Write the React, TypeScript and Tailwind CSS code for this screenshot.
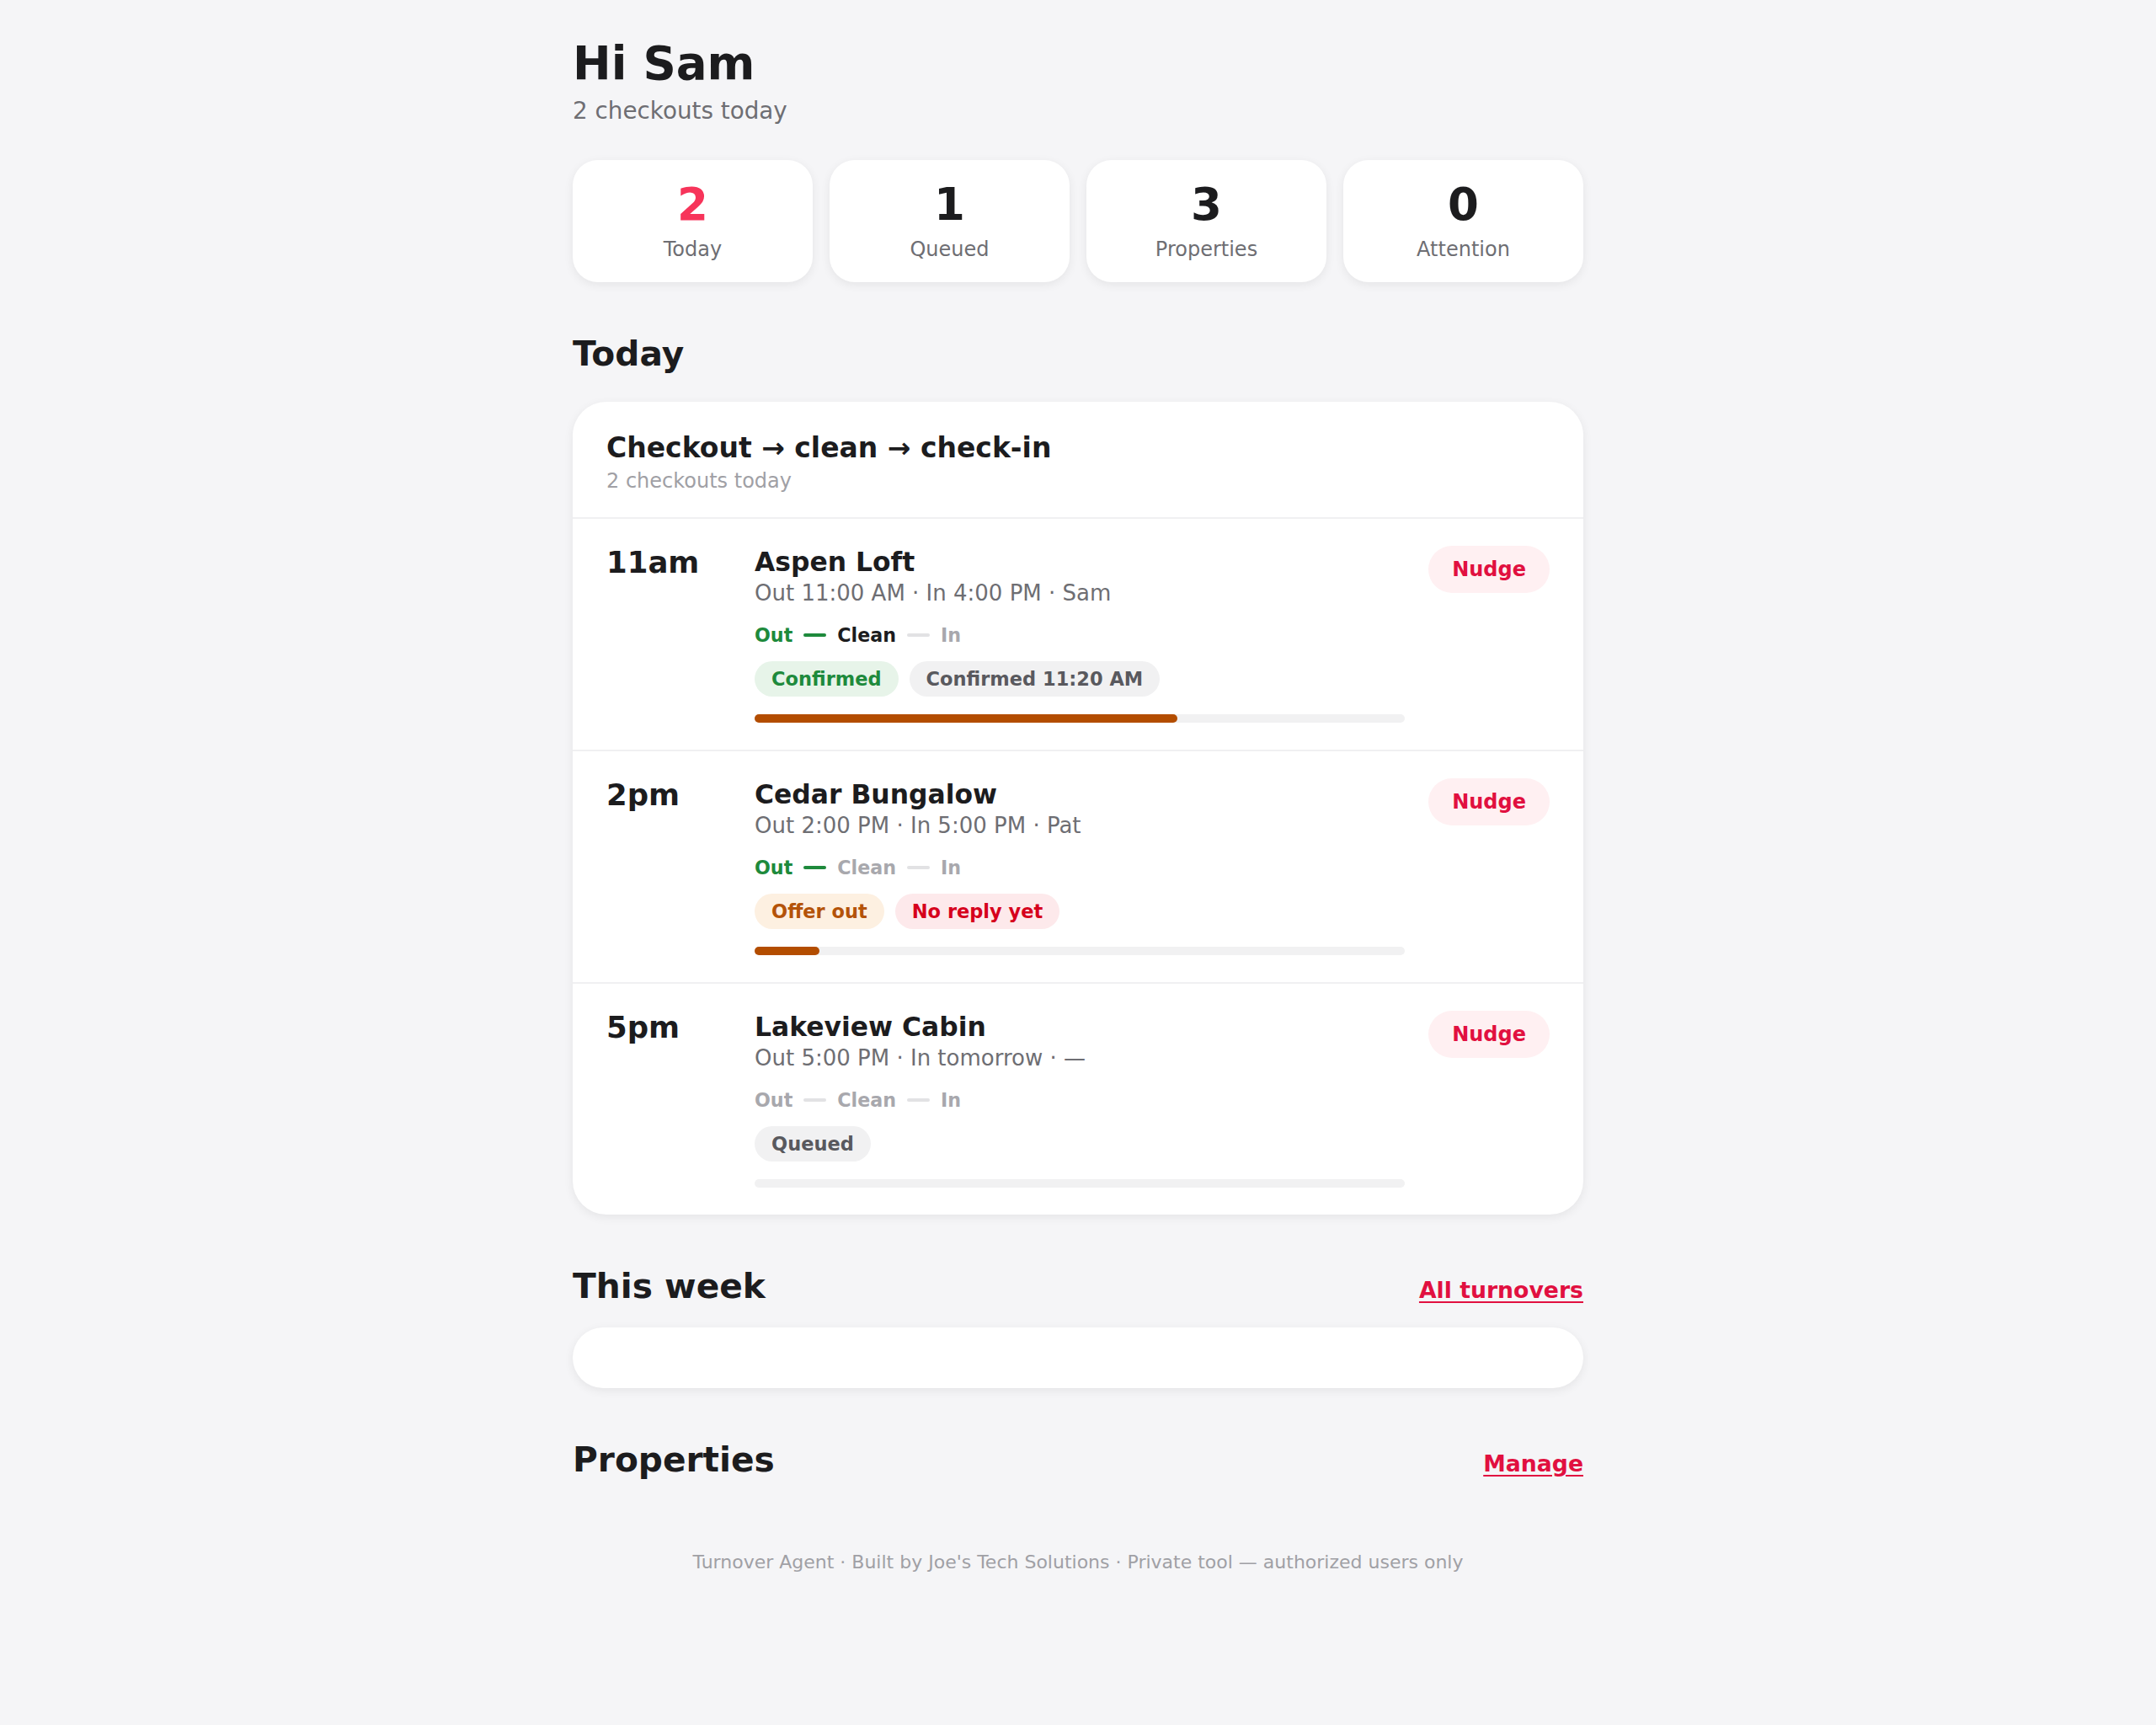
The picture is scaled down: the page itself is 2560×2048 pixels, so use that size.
import React from 'react';

type Stage = 'done' | 'current' | 'todo';

type Badge = { label: string; tone: 'green' | 'gray' | 'orange' | 'red' };

type Turnover = {
  time: string;
  name: string;
  meta: string;
  stages: [Stage, Stage, Stage];
  badges: Badge[];
  progress: number;
};

const stats = [
  { value: '2', label: 'Today', accent: true },
  { value: '1', label: 'Queued' },
  { value: '3', label: 'Properties' },
  { value: '0', label: 'Attention' },
];

const turnovers: Turnover[] = [
  {
    time: '11am',
    name: 'Aspen Loft',
    meta: 'Out 11:00 AM · In 4:00 PM · Sam',
    stages: ['done', 'current', 'todo'],
    badges: [
      { label: 'Confirmed', tone: 'green' },
      { label: 'Confirmed 11:20 AM', tone: 'gray' },
    ],
    progress: 65,
  },
  {
    time: '2pm',
    name: 'Cedar Bungalow',
    meta: 'Out 2:00 PM · In 5:00 PM · Pat',
    stages: ['done', 'todo', 'todo'],
    badges: [
      { label: 'Offer out', tone: 'orange' },
      { label: 'No reply yet', tone: 'red' },
    ],
    progress: 10,
  },
  {
    time: '5pm',
    name: 'Lakeview Cabin',
    meta: 'Out 5:00 PM · In tomorrow · —',
    stages: ['todo', 'todo', 'todo'],
    badges: [{ label: 'Queued', tone: 'gray' }],
    progress: 0,
  },
];

const badgeTone: Record<Badge['tone'], string> = {
  green: 'bg-[#e7f4e9] text-[#1e8a3c]',
  gray: 'bg-[#f1f1f2] text-[#59595e]',
  orange: 'bg-[#fdf0e1] text-[#b45309]',
  red: 'bg-[#fde9eb] text-[#d6001c]',
};

const stageText: Record<Stage, string> = {
  done: 'text-[#1e8a3c]',
  current: 'text-[#1c1c1e]',
  todo: 'text-[#a8a8ad]',
};

function StageTrack({ stages }: { stages: [Stage, Stage, Stage] }) {
  const labels = ['Out', 'Clean', 'In'];
  return (
    <div className="mt-[22px] flex items-center gap-[13px] text-[22.2px] font-bold leading-[24px]">
      {labels.map((label, i) => (
        <React.Fragment key={label}>
          {i > 0 && (
            <span
              className={
                stages[i - 1] === 'done'
                  ? 'h-[4px] w-[27px] rounded-full bg-[#1e8a3c]'
                  : 'h-[4px] w-[27px] rounded-full bg-[#e2e2e4]'
              }
            />
          )}
          <span className={stageText[stages[i]]}>{label}</span>
        </React.Fragment>
      ))}
    </div>
  );
}

function TurnoverRow({ item }: { item: Turnover }) {
  return (
    <div className="flex border-t-2 border-[#f0f0f2] px-[40px] pt-[32px] pb-[32px]">
      <div className="w-[176px] shrink-0 text-[35.5px] font-bold leading-[40px] text-[#1c1c1e]">
        {item.time}
      </div>
      <div className="min-w-0 flex-1">
        <div className="text-[31.4px] font-bold leading-[38px] text-[#1c1c1e]">{item.name}</div>
        <div className="mt-[2px] text-[26px] leading-[32px] text-[#6e6e73]">{item.meta}</div>
        <StageTrack stages={item.stages} />
        <div className="mt-[19px] flex gap-[13px]">
          {item.badges.map((b) => (
            <span
              key={b.label}
              className={`rounded-full px-[20px] py-[9px] text-[22.5px] font-bold leading-[24px] ${badgeTone[b.tone]}`}
            >
              {b.label}
            </span>
          ))}
        </div>
        <div className="mt-[21px] h-[10px] rounded-full bg-[#f1f1f2]">
          <div
            className="h-full rounded-full bg-[#b34d00]"
            style={{ width: `${item.progress}%` }}
          />
        </div>
      </div>
      <div className="ml-[28px] shrink-0">
        <button className="rounded-full bg-[#fff0f2] px-[28px] py-[13px] text-[24px] font-bold leading-[30px] text-[#e11040]">
          Nudge
        </button>
      </div>
    </div>
  );
}

function SectionHeader({ title, link }: { title: string; link?: string }) {
  return (
    <div className="flex items-baseline justify-between">
      <h2 className="text-[40.7px] font-bold leading-[52px] text-[#1c1c1e]">{title}</h2>
      {link && (
        <a href="#" className="text-[26.7px] font-bold leading-[34px] text-[#e11040] underline underline-offset-[4px]">
          {link}
        </a>
      )}
    </div>
  );
}

export default function App() {
  return (
    <div className="min-h-screen bg-[#f5f5f7] font-['DejaVu_Sans',sans-serif]">
      <div className="mx-auto w-[1200px] pt-[41px] pb-[120px]">
        {/* Greeting */}
        <h1 className="text-[54.6px] font-bold leading-[68px] text-[#1c1c1e]">Hi Sam</h1>
        <p className="mt-[7px] text-[27.8px] leading-[32px] text-[#6e6e73]">2 checkouts today</p>

        {/* Stats */}
        <div className="mt-[42px] grid grid-cols-4 gap-[20px]">
          {stats.map((s) => (
            <div
              key={s.label}
              className="rounded-[30px] bg-white pt-[26px] pb-[25px] text-center shadow-[0_3px_12px_rgba(0,0,0,0.07)]"
            >
              <div
                className={
                  s.accent
                    ? 'text-[53px] font-bold leading-none text-[#f7345a]'
                    : 'text-[53px] font-bold leading-none text-[#1c1c1e]'
                }
              >
                {s.value}
              </div>
              <div className="mt-[14px] text-[24px] leading-[27px] text-[#6e6e73]">{s.label}</div>
            </div>
          ))}
        </div>

        {/* Today */}
        <div className="mt-[59px]">
          <SectionHeader title="Today" />
        </div>
        <div className="mt-[31px] overflow-hidden rounded-[40px] bg-white shadow-[0_3px_12px_rgba(0,0,0,0.07)]">
          <div className="px-[40px] pt-[35px] pb-[29px]">
            <div className="text-[33px] font-bold leading-[40px] text-[#1c1c1e]">
              Checkout → clean → check-in
            </div>
            <div className="mt-[5px] text-[24px] leading-[28px] text-[#a0a0a5]">2 checkouts today</div>
          </div>
          {turnovers.map((t) => (
            <TurnoverRow key={t.name} item={t} />
          ))}
        </div>

        {/* This week */}
        <div className="mt-[59px]">
          <SectionHeader title="This week" link="All turnovers" />
        </div>
        <div className="mt-[23px] h-[72px] rounded-[40px] bg-white shadow-[0_3px_12px_rgba(0,0,0,0.07)]" />

        {/* Properties */}
        <div className="mt-[59px]">
          <SectionHeader title="Properties" link="Manage" />
        </div>

        {/* Footer */}
        <p className="mt-[83px] text-center text-[22px] leading-[26px] text-[#a0a0a5]">
          Turnover Agent · Built by Joe's Tech Solutions · Private tool — authorized users only
        </p>
      </div>
    </div>
  );
}
